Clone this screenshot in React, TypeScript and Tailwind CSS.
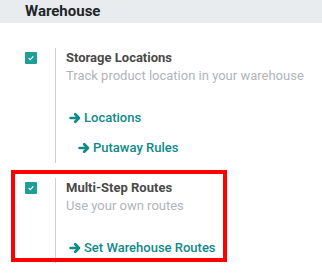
const ArrowRight = () => (
  <svg viewBox="0 0 12 12" className="h-[12px] w-[12px] shrink-0" fill="none" stroke="currentColor" strokeWidth="2.7" strokeLinecap="round" strokeLinejoin="round">
    <path d="M1.6 6 H9.6" />
    <path d="M6.2 2.3 L9.9 6 L6.2 9.7" />
  </svg>
);

const Check = () => (
  <div className="w-[12px] h-[12px] bg-[#1f9e98] rounded-[1px] flex items-center justify-center">
    <svg viewBox="0 0 12 12" className="w-[8px] h-[8px]">
      <path d="M2.5 6.2 L5 8.5 L9.5 3.5" stroke="white" strokeWidth="1.8" fill="none" />
    </svg>
  </div>
);

function LinkRow({ label, indent }: { label: string; indent?: boolean }) {
  return (
    <a className={`flex items-center gap-[3px] text-[#0e8a88] font-medium text-[13px] leading-[18px] ${indent ? "pl-[12px]" : "pl-[3px]"}`}>
      <ArrowRight />
      {label}
    </a>
  );
}

export default function App() {
  return (
    <div className="w-[322px] h-[276px] bg-white font-['Roboto',sans-serif] overflow-hidden">
      <div className="h-[23px] bg-[#e9ecef] pl-[25px] flex items-center">
        <h2 className="text-[15px] font-bold text-[#212529] leading-none">Warehouse</h2>
      </div>

      {/* Storage locations */}
      <div className="flex mt-[25px]">
        <div className="w-[55px] pl-[25px] pt-[4px]">
          <Check />
        </div>
        <div className="border-l border-[#cfcfcf] pl-[10px] pb-[6px] w-[267px]">
          <div className="text-[13px] font-bold text-[#4a4a4a] leading-[18px] pt-[1px]">Storage Locations</div>
          <div className="text-[13px] text-[#b0b5ba] leading-[18px]">Track product location in your warehouse</div>
          <div className="mt-[24px]">
            <LinkRow label="Locations" />
          </div>
          <div className="mt-[12px]">
            <LinkRow label="Putaway Rules" indent />
          </div>
        </div>
      </div>

      {/* Multi-step routes */}
      <div className="relative mt-[15px]">
        <div className="flex">
          <div className="w-[55px] pl-[25px] pt-[4px]">
            <Check />
          </div>
          <div className="border-l border-[#cfcfcf] pl-[10px] pb-[6px] w-[267px]">
            <div className="text-[13px] font-bold text-[#4a4a4a] leading-[18px] pt-[1px]">Multi-Step Routes</div>
            <div className="text-[13px] text-[#b0b5ba] leading-[18px]">Use your own routes</div>
            <div className="mt-[24px]">
              <LinkRow label="Set Warehouse Routes" />
            </div>
          </div>
        </div>
        <div className="absolute left-[11px] top-[-8px] w-[216px] h-[92px] border-[4px] border-[#ff0000] pointer-events-none" />
      </div>
    </div>
  );
}
